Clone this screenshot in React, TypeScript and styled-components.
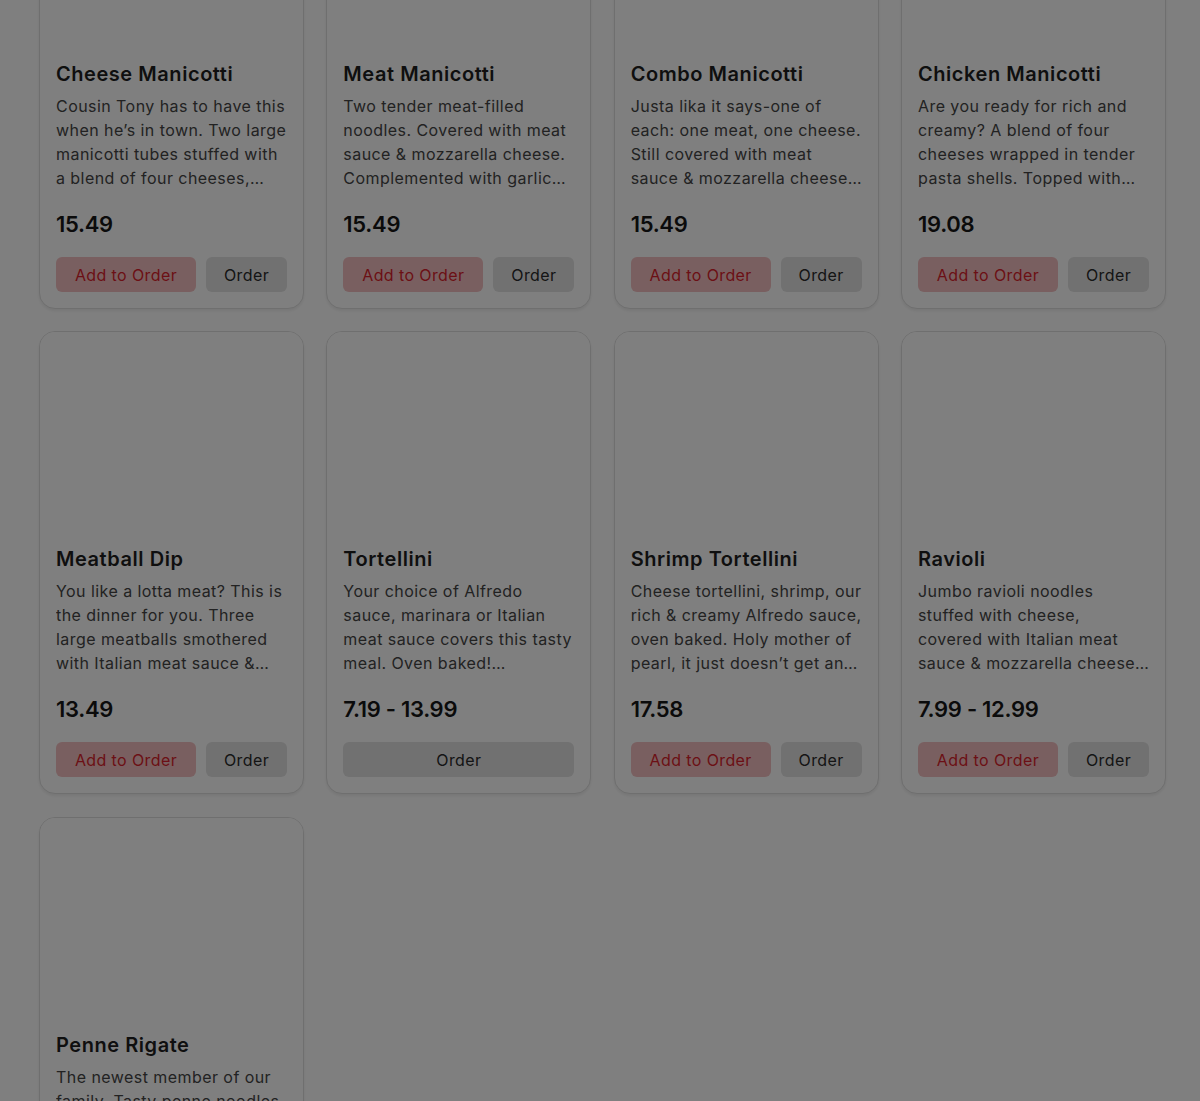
import { styled, createGlobalStyle } from 'styled-components'

const GlobalStyle = createGlobalStyle`
    html, body {
        margin: 0;
        padding: 0;
        height: 100%;
        overflow: hidden;
        background: #ffffff;
        font-family: Inter, "Open Sans", sans-serif;
    }
`

type MenuItem = {
    name: string
    description: string
    price: string
    canAdd: boolean
}

const menuItems: MenuItem[] = [
    {
        name: 'Cheese Manicotti',
        description: 'Cousin Tony has to have this when he\u2019s in town. Two large manicotti tubes stuffed with a blend of four cheeses, covered with marinara sauce & mozzarella cheese. Oven baked.',
        price: '15.49',
        canAdd: true,
    },
    {
        name: 'Meat Manicotti',
        description: 'Two tender meat-filled noodles. Covered with meat sauce & mozzarella cheese. Complemented with garlic bread and a side salad.',
        price: '15.49',
        canAdd: true,
    },
    {
        name: 'Combo Manicotti',
        description: 'Justa lika it says-one of each: one meat, one cheese. Still covered with meat sauce & mozzarella cheese, oven baked.',
        price: '15.49',
        canAdd: true,
    },
    {
        name: 'Chicken Manicotti',
        description: 'Are you ready for rich and creamy? A blend of four cheeses wrapped in tender pasta shells. Topped with grilled chicken and Alfredo sauce.',
        price: '19.08',
        canAdd: true,
    },
    {
        name: 'Meatball Dip',
        description: 'You like a lotta meat? This is the dinner for you. Three large meatballs smothered with Italian meat sauce & melted mozzarella cheese.',
        price: '13.49',
        canAdd: true,
    },
    {
        name: 'Tortellini',
        description: 'Your choice of Alfredo sauce, marinara or Italian meat sauce covers this tasty meal. Oven baked! Accompanied by garlic bread.',
        price: '7.19 - 13.99',
        canAdd: false,
    },
    {
        name: 'Shrimp Tortellini',
        description: 'Cheese tortellini, shrimp, our rich & creamy Alfredo sauce, oven baked. Holy mother of pearl, it just doesn\u2019t get any better.',
        price: '17.58',
        canAdd: true,
    },
    {
        name: 'Ravioli',
        description: 'Jumbo ravioli noodles stuffed with cheese, covered with Italian meat sauce & mozzarella cheese, then oven baked to perfection.',
        price: '7.99 - 12.99',
        canAdd: true,
    },
    {
        name: 'Penne Rigate',
        description: 'The newest member of our family. Tasty penne noodles tossed in your choice of sauce and topped with mozzarella cheese.',
        price: '9.99',
        canAdd: true,
    },
]

const StyledMenuGrid = styled.div`
    display: grid;
    grid-template-columns: repeat(4, 1fr);
    gap: 22.33px;
    width: 1127px;
    padding: 0 0 40px 39px;
    margin-top: -154px;
`

const StyledCard = styled.div`
    display: flex;
    flex-direction: column;
    background: #ffffff;
    border: 1px solid #dedede;
    border-radius: 16px;
    box-shadow: 0 2px 3px rgba(0, 0, 0, 0.07);
    overflow: hidden;

    .image-placeholder{
        height: 199px;
        background: #ffffff;
    }

    .card-body{
        display: flex;
        flex-direction: column;
        padding: 16px;
    }

    .item-name{
        margin: 0;
        font-size: 20px;
        line-height: 24px;
        font-weight: 600;
        letter-spacing: 0.55px;
        color: #1e1e1e;
    }

    .item-description{
        margin: 8px 0 0;
        font-size: 16px;
        line-height: 24px;
        letter-spacing: 0.44px;
        color: #454545;
        display: -webkit-box;
        -webkit-line-clamp: 4;
        -webkit-box-orient: vertical;
        overflow: hidden;
        height: 96px;
    }

    .item-price{
        margin-top: 20px;
        font-size: 22px;
        line-height: 28px;
        font-weight: 600;
        color: #161616;
        letter-spacing: -0.3px;
    }

    .actions{
        display: flex;
        gap: 10px;
        margin-top: 19px;
    }
`

const StyledButton = styled.button<{ $variant: 'add' | 'order'; $wide?: boolean }>`
    height: 35px;
    border: none;
    border-radius: 6px;
    font-family: inherit;
    font-size: 16px;
    letter-spacing: 0.4px;
    cursor: pointer;
    background: ${ ({ $variant }) => $variant === 'add' ? '#f3bfc0' : '#e3e3e3' };
    color: ${ ({ $variant }) => $variant === 'add' ? '#d81f2c' : '#2a2a2a' };
    flex: ${ ({ $variant, $wide }) => $wide ? '1' : $variant === 'add' ? '0 0 140px' : '1' };
`

const StyledOverlay = styled.div`
    position: fixed;
    inset: 0;
    background: rgba(0, 0, 0, 0.5);
`

const MenuCard = ({ item }: { item: MenuItem }) => {

    return (
        <StyledCard className='menu-card'>

            <div className='image-placeholder' />

            <div className='card-body'>

                <h3 className='item-name'>{ item.name }</h3>

                <p className='item-description'>{ item.description }</p>

                <div className='item-price'>{ item.price }</div>

                <div className='actions'>
                    { item.canAdd && <StyledButton $variant='add'>Add to Order</StyledButton> }
                    <StyledButton $variant='order' $wide={ !item.canAdd }>Order</StyledButton>
                </div>

            </div>

        </StyledCard>
    )
}

const App = () => {

    return (
        <>
            <GlobalStyle />

            <StyledMenuGrid className='menu-grid'>
                { menuItems.map((item) => <MenuCard key={ item.name } item={ item } />) }
            </StyledMenuGrid>

            <StyledOverlay className='overlay' />
        </>
    )
}

export default App
